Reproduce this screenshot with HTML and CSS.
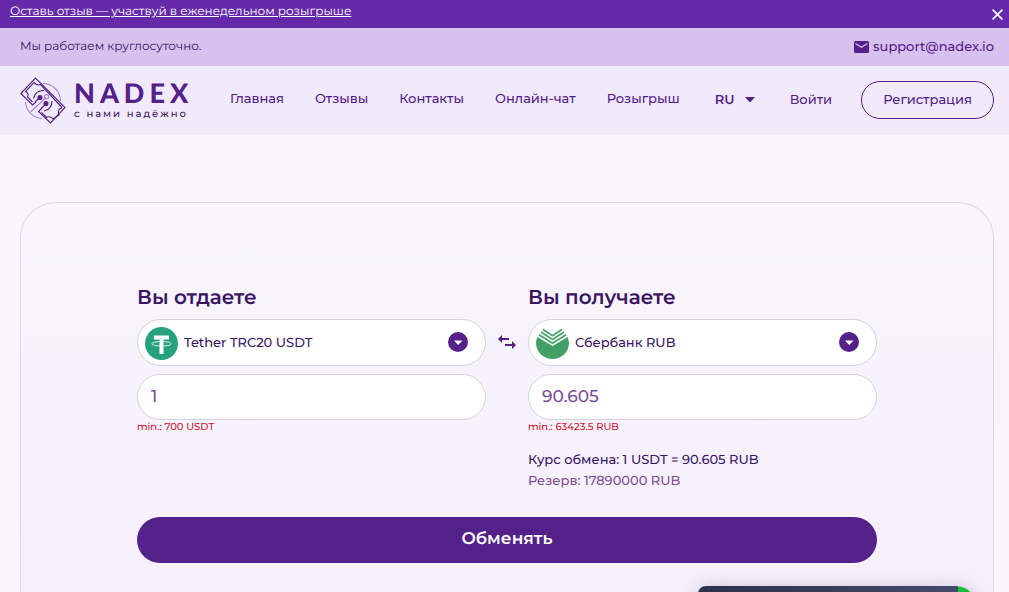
FILE: index.html
```html
<!DOCTYPE html>
<html lang="ru">
<head>
<meta charset="utf-8">
<meta name="viewport" content="width=device-width, initial-scale=1">
<title>NADEX</title>
<link rel="stylesheet" href="styles.css">
</head>
<body>
<div class="promo">
  <a class="promo-link" href="#">Оставь отзыв — участвуй в еженедельном розыгрыше</a>
  <button class="promo-close" type="button" aria-label="Закрыть">
    <svg width="11" height="11" viewBox="0 0 10 10" fill="none" stroke="#fff" stroke-width="1.5" stroke-linecap="round"><path d="M1 1l8 8M9 1L1 9"/></svg>
  </button>
</div>
<div class="info">
  <span class="info-hours">Мы работаем круглосуточно.</span>
  <a class="info-mail" href="mailto:support@nadex.io">
    <svg width="15" height="12" viewBox="0 0 15 12"><rect width="15" height="12" rx="1.5" fill="#54208a"/><path d="M1.500 2.500l6 3.800 6-3.800" fill="none" stroke="#d7c1ef" stroke-width="1.300"/></svg>
    support@nadex.io
  </a>
</div>
<header class="header">
  <a class="logo" href="#">
    <svg width="46" height="48" viewBox="0 0 46 48" fill="none" stroke="#54208a" stroke-width="1.100">
      <g stroke="#ab7fdf">
        <path d="M23 6.500A17.500 17.500 0 0 1 40.500 24"/>
        <path d="M5.500 25A17.500 17.500 0 0 0 22 41.500"/>
        <path d="M10.500 35L26 20.500"/>
        <circle cx="26.500" cy="19.800" r="2.200"/>
      </g>
      <path d="M16 25L12.500 28 .800 16.500 15.500 1 45 30.500 30.500 46 18.500 34.500 22 31"/>
      <path d="M12.500 25L7.500 20Q9.500 16.500 5.500 14.500L14 5.500Q17.500 9 20.500 7.500L42 30.500"/>
      <path d="M42 30.500L39 32.500Q37.500 35.500 39 38L33 42Q30 38.500 26.500 40.500L21.500 35.500"/>
      <path d="M13.500 21.500A9.500 9.500 0 0 1 24 13.500M32 24A9.500 9.500 0 0 1 24 34"/>
      <path d="M20 20L15 25M26 27L21 31.500"/>
      <circle cx="20" cy="20.500" r="2" fill="#54208a"/>
      <circle cx="26" cy="26.500" r="2" fill="#54208a"/>
    </svg>
    <span class="logo-text">
      <span class="logo-name">NADEX</span>
      <span class="logo-slogan">с нами надёжно</span>
    </span>
  </a>
  <nav class="nav">
    <a href="#">Главная</a>
    <a href="#">Отзывы</a>
    <a href="#">Контакты</a>
    <a href="#">Онлайн-чат</a>
    <a href="#">Розыгрыш</a>
  </nav>
  <div class="account">
    <select class="lang" aria-label="Язык"><option>RU</option></select>
    <svg class="lang-arrow" width="10" height="6" viewBox="0 0 10 6"><path d="M0 0h10L5 5.500z" fill="#54208a"/></svg>
    <a class="login" href="#">Войти</a>
    <a class="register" href="#">Регистрация</a>
  </div>
</header>
<main class="main">
  <form class="card">
    <div class="exchange">
      <section class="side">
        <h2 class="side-title"><label for="give">Вы отдаете</label></h2>
        <div class="currency">
          <svg class="currency-icon" width="33" height="33" viewBox="0 0 33 33"><circle cx="16.500" cy="16.500" r="16.500" fill="#26a17b"/><path d="M9 8.500h15v4h-5.500V27h-4V12.500H9z" fill="#fff"/><ellipse cx="16.500" cy="16.800" rx="9.700" ry="2.300" fill="none" stroke="#fff" stroke-width=".8"/></svg>
          <select class="field currency-select" id="give"><option>Tether TRC20 USDT</option></select>
          <svg class="currency-arrow" width="20" height="20" viewBox="0 0 20 20"><circle cx="10" cy="10" r="10" fill="#54208a"/><path d="M6 8.500h8.500L10.200 13z" fill="#fff"/></svg>
        </div>
        <input class="field amount" type="text" value="1" aria-label="Сумма, которую вы отдаете">
        <p class="limit">min.: 700 USDT</p>
      </section>
      <button class="swap" type="button" aria-label="Поменять местами">
        <svg width="18" height="14" viewBox="0 0 18 14"><path d="M4 0v3h7v2H4v3L0 4z" fill="#54208a"/><path d="M14 6v3H7v2h7v3l4-4z" fill="#54208a"/></svg>
      </button>
      <section class="side">
        <h2 class="side-title"><label for="get">Вы получаете</label></h2>
        <div class="currency">
          <svg class="currency-icon" width="33" height="33" viewBox="0 0 33 33"><path d="M1.500 10L16.500 19 31.500 10A16 16 0 0 1 33 16C33 25 25.500 32 16.500 32S0 25 0 16A16 16 0 0 1 1.500 10z" fill="#449f66"/><g fill="none" stroke="#449f66" stroke-width="1.700"><path d="M3 7.700l13.500 8.500 13.500-8.500"/><path d="M5 5l11.500 7.500L28 5"/><path d="M7 2.500l9.500 6.300 9.500-6.300"/></g></svg>
          <select class="field currency-select" id="get"><option>Сбербанк RUB</option></select>
          <svg class="currency-arrow" width="20" height="20" viewBox="0 0 20 20"><circle cx="10" cy="10" r="10" fill="#54208a"/><path d="M6 8.500h8.500L10.200 13z" fill="#fff"/></svg>
        </div>
        <input class="field amount" type="text" value="90.605" aria-label="Сумма, которую вы получаете">
        <p class="limit">min.: 63423.5 RUB</p>
        <p class="rate">Курс обмена: 1 USDT = 90.605 RUB</p>
        <p class="reserve">Резерв: 17890000 RUB</p>
      </section>
    </div>
    <button class="submit" type="button">Обменять</button>
  </form>
</main>
<aside class="chat" aria-label="Онлайн-чат"><span class="chat-bar"></span><span class="chat-status"></span></aside>
</body>
</html>
```

FILE: styles.css
```css
* { box-sizing: border-box; }
body {
  margin: 0;
  min-height: 100vh;
  display: flex;
  flex-direction: column;
  background: #f8f6fc;
  color: #3b1564;
  font: 500 13px/20px Montserrat, Inter, sans-serif;
  text-rendering: geometricPrecision;
}
a { color: #54208a; text-decoration: none; white-space: nowrap; }
button, input, select { font: inherit; color: inherit; text-rendering: inherit; }
button { padding: 0; border: 0; background: none; cursor: pointer; }
h2, p { margin: 0; }
svg { flex: none; display: block; }

.promo {
  height: 28px;
  padding: 0 6px 0 10px;
  display: flex;
  justify-content: space-between;
  background: #652aa9;
}
.promo-link { color: #fff; font-size: 12px; font-weight: 400; line-height: 24px; text-decoration: underline; }
.promo-close { display: flex; align-items: center; }

.info {
  height: 38px;
  padding: 0 15px 0 20px;
  display: flex;
  align-items: center;
  justify-content: space-between;
  background: #d7c1ef;
}
.info-hours { font-size: 12px; font-weight: 400; }
.info-mail { display: flex; align-items: center; gap: 4px; }

.header {
  min-height: 69px;
  padding: 0 15px 0 20px;
  display: flex;
  align-items: center;
  background: #f1eafa;
}
.logo { display: flex; align-items: center; gap: 8px; }
.logo-text { display: flex; flex-direction: column; width: 118px; padding-bottom: 2px; }
.logo-name { font: 900 27px/28px Lato, sans-serif; letter-spacing: 5px; }
.logo-slogan { font-size: 10px; line-height: 14px; letter-spacing: 2px; color: #3b1564; white-space: nowrap; }
.nav { display: flex; gap: 31px; margin-left: 38px; padding-bottom: 4px; }
.account { display: flex; align-items: center; margin-left: auto; padding-bottom: 2px; }
.lang {
  appearance: none;
  padding: 0;
  border: 0;
  background: none;
  color: #54208a;
  font-weight: 600;
}
.lang-arrow { margin-left: 10px; }
.login { margin-left: 35px; }
.register {
  margin-left: 29px;
  padding: 8px 21px;
  border: 1px solid #54208a;
  border-radius: 19px;
}

.main { flex: 1; display: flex; padding: 67px 15px 0 20px; }
.card {
  flex: 1;
  padding: 84px 116px 28px;
  border: 1px solid #e2d3f3;
  border-bottom: 0;
  border-radius: 36px 36px 0 0;
  background: linear-gradient(#f8f6fc, #f6effc);
}
.exchange { display: grid; grid-template-columns: 1fr 42px 1fr; }
.side { min-width: 0; }
.side-title { margin-bottom: 10px; font-size: 20px; font-weight: 600; line-height: 22px; }
.currency { position: relative; margin-bottom: 8px; }
.currency-icon { position: absolute; left: 8px; top: 8px; pointer-events: none; }
.currency-arrow { position: absolute; right: 18px; top: 13px; pointer-events: none; }
.field {
  display: block;
  width: 100%;
  height: 46px;
  border: 1px solid #d5d3d8;
  border-radius: 24px;
  background: #fff;
  outline: 0;
}
.currency-select { appearance: none; height: 47px; padding: 0 46px; }
.amount { padding: 0 13px; font-size: 17px; color: #7d4f98; }
.limit { font-size: 10px; line-height: 14px; color: #d3122c; }
.rate { margin-top: 16px; line-height: 21px; }
.reserve { line-height: 21px; color: #7d4f98; }
.swap { display: flex; justify-content: center; align-self: start; margin-top: 48px; }
.submit {
  width: 100%;
  height: 46px;
  margin-top: 25px;
  padding-bottom: 2px;
  border-radius: 23px;
  background: #54208a;
  color: #fff;
  font-size: 17px;
  font-weight: 600;
}

.chat {
  position: fixed;
  right: 33px;
  bottom: -54px;
  width: 278px;
  height: 60px;
  display: flex;
  overflow: hidden;
  border-radius: 8px 20px 0 0;
  box-shadow: 0 0 16px #2d294c33;
}
.chat-bar { flex: 1; background: linear-gradient(90deg, #2e2f4b, #474a6c); }
.chat-status { width: 18px; background: #18c139; }
```
